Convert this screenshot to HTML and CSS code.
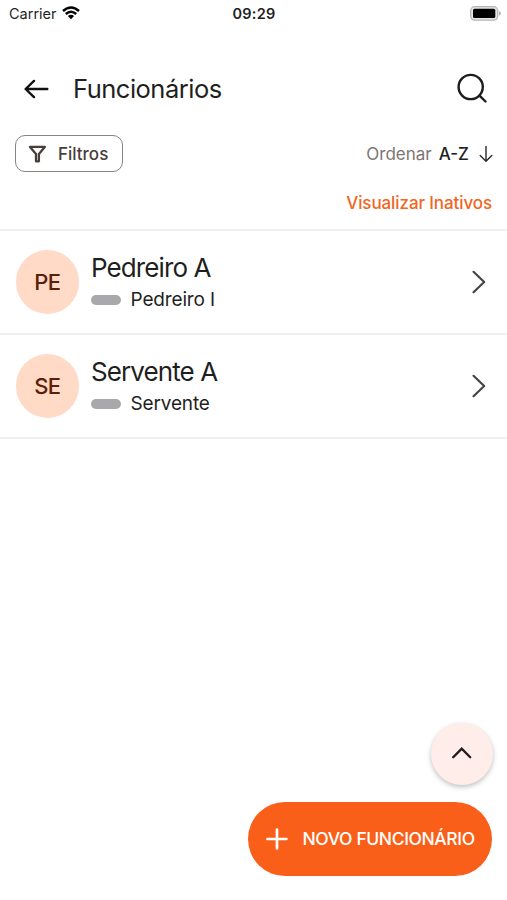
FILE: index.html
```html
<!DOCTYPE html>
<html lang="pt-BR">
<head>
<meta charset="utf-8">
<title>Funcionários</title>
<link rel="stylesheet" href="styles.css">
</head>
<body>
<div class="screen">
  <div class="status">
    <div class="carrier"><span>Carrier</span>
      <svg width="18" height="14" viewBox="0 0 18 14" fill="none" stroke="#000" stroke-width="2.5"><path d="M1 5Q9-2 17 5M3.8 8Q9 3.4 14.2 8"/><path d="M5.9 9.9Q9 7.5 12.1 9.9L9 13.3Z" fill="#000" stroke="none"/></svg>
    </div>
    <span class="time">09:29</span>
    <svg class="battery" width="31" height="15" viewBox="0 0 31 15"><rect x=".7" y=".7" width="27" height="13.4" rx="4" fill="#e6e6e6" stroke="#b5b5b5" stroke-width="1.3"/><rect x="3" y="2.7" width="22.3" height="9.3" rx="1.5"/><path d="M29 5.3Q30.8 6 30.8 7.4T29 9.5Z" fill="#aaa"/></svg>
  </div>
  <header class="header">
    <svg width="26" height="22" viewBox="0 0 26 22" fill="none" stroke="#111" stroke-width="2.4" stroke-linecap="round" stroke-linejoin="round"><path d="M23.3 11H1.8M10 2.9L1.6 11L10 19.1"/></svg>
    <h1>Funcionários</h1>
    <svg class="search" width="32" height="32" viewBox="0 0 32 32" fill="none" stroke="#1c1c1e" stroke-width="2.4" stroke-linecap="round"><circle cx="13.7" cy="14" r="12.1"/><path d="M22.5 22.7L28.5 28.5"/></svg>
  </header>
  <div class="tools">
    <button class="filter"><svg width="18" height="18" viewBox="0 0 18 18" fill="none" stroke="#493e3a" stroke-width="2.3" stroke-linejoin="round"><path d="M2 1.9H16.8L10.9 9V16.3H8V9Z"/></svg><span>Filtros</span></button>
    <div class="sort"><span class="sort-label">Ordenar</span><b>A-Z</b>
      <svg width="14" height="18" viewBox="0 0 14 18" fill="none" stroke="#292929" stroke-width="1.4" stroke-linecap="round" stroke-linejoin="round"><path d="M7 1.5V16.2M1.2 10.5L7 16.3L12.8 10.5"/></svg>
    </div>
  </div>
  <div class="inactive"><span>Visualizar Inativos</span></div>
  <div class="list">
    <div class="row">
      <div class="avatar"><span>PE</span></div>
      <div class="info"><div class="name">Pedreiro A</div><div class="role"><i></i><span>Pedreiro I</span></div></div>
      <svg width="16" height="24" viewBox="0 0 16 24" fill="none" stroke="#444" stroke-width="2.2" stroke-linecap="round" stroke-linejoin="round"><path d="M2.5 1.8L13.2 12L2.5 22.2"/></svg>
    </div>
    <div class="row">
      <div class="avatar"><span>SE</span></div>
      <div class="info"><div class="name">Servente A</div><div class="role"><i></i><span>Servente</span></div></div>
      <svg width="16" height="24" viewBox="0 0 16 24" fill="none" stroke="#444" stroke-width="2.2" stroke-linecap="round" stroke-linejoin="round"><path d="M2.5 1.8L13.2 12L2.5 22.2"/></svg>
    </div>
  </div>
  <div class="actions">
    <button class="top"><svg width="20" height="14" viewBox="0 0 20 14" fill="none" stroke="#211a18" stroke-width="2.3" stroke-linecap="round" stroke-linejoin="miter"><path d="M1.2 10.3L9.7 1.7L18.2 10.3"/></svg></button>
    <button class="new"><svg width="22" height="22" viewBox="0 0 22 22" fill="none" stroke="#fff" stroke-width="2.7" stroke-linecap="round"><path d="M11 1.5V20.5M1.5 11H20.5"/></svg><span>NOVO FUNCIONÁRIO</span></button>
  </div>
</div>
</body>
</html>
```
FILE: styles.css
```css
* { box-sizing: border-box; }
body { margin: 0; background: #fff; font-family: Inter, "Liberation Sans", sans-serif; color: #1f1f1f; }
button { font: inherit; border: 0; padding: 0; }
svg { display: block; flex: none; }
span, b, h1, .name { white-space: nowrap; }
.screen { width: 507px; height: 900px; display: flex; flex-direction: column; background: #fff; overflow: hidden; }
.status { height: 27px; display: grid; grid-template-columns: 1fr auto 1fr; align-items: center; padding: 0 6px 0 9px; }
.carrier { display: flex; align-items: center; gap: 5px; font-size: 14.5px; }
.carrier svg { margin-bottom: 1px; }
.time { font-size: 14.5px; font-weight: 600; letter-spacing: .25px; margin-right: 2px; }
.battery { justify-self: end; margin-bottom: 1px; }
.header { height: 108px; display: flex; align-items: center; padding: 15px 18px 0 24px; }
.header h1 { flex: 1; margin: 0 0 0 23px; font-size: 25.5px; font-weight: 400; letter-spacing: -.5px; line-height: 32px; }
.tools { height: 37px; display: flex; align-items: center; justify-content: space-between; padding: 0 14px 0 15px; }
.filter { width: 108px; height: 37px; border: 1.5px solid #8a8481; border-radius: 10px; background: #fff; display: flex; align-items: center; padding-left: 12px; gap: 12px; color: #493e3a; font-size: 17px; font-weight: 500; }
.sort { display: flex; align-items: center; font-size: 17px; }
.sort-label { color: #7d7573; }
.sort b { font-weight: 500; margin: 0 10px 0 7px; }
.inactive { height: 57px; padding: 20px 15px 0 0; text-align: right; color: #f26522; font-size: 17px; font-weight: 500; line-height: 22px; letter-spacing: -.1px; }
.list { border-top: 2px solid #efefef; }
.row { height: 104px; border-bottom: 2px solid #efefef; display: flex; align-items: center; padding: 0 20px 0 15.5px; }
.avatar { width: 63.5px; height: 63.5px; border-radius: 50%; background: #ffdac7; color: #5c2008; display: grid; place-items: center; font-size: 22px; font-weight: 500; letter-spacing: -.7px; }
.info { flex: 1; margin-left: 12px; }
.name { font-size: 26px; line-height: 33px; margin-bottom: 2px; letter-spacing: -.9px; }
.role { display: flex; align-items: center; font-size: 19px; line-height: 28px; letter-spacing: -.15px; }
.role i { width: 29.5px; height: 10px; border-radius: 5px; background: #a9a9ab; margin-right: 10px; }
.actions { margin-top: auto; padding: 0 15px 24px 0; display: flex; flex-direction: column; align-items: flex-end; gap: 17.5px; }
.top { width: 62px; height: 62px; margin-right: -1px; border-radius: 50%; background: #ffedea; display: grid; place-items: center; box-shadow: 0 2px 5px rgba(0,0,0,.25); }
.new { width: 244.5px; height: 74px; border-radius: 37px; background: #fa5f1a; color: #fff; display: flex; align-items: center; padding-left: 18px; gap: 15px; font-size: 17.5px; font-weight: 500; letter-spacing: -.4px; }
.new span { padding-bottom: 2px; }
```
